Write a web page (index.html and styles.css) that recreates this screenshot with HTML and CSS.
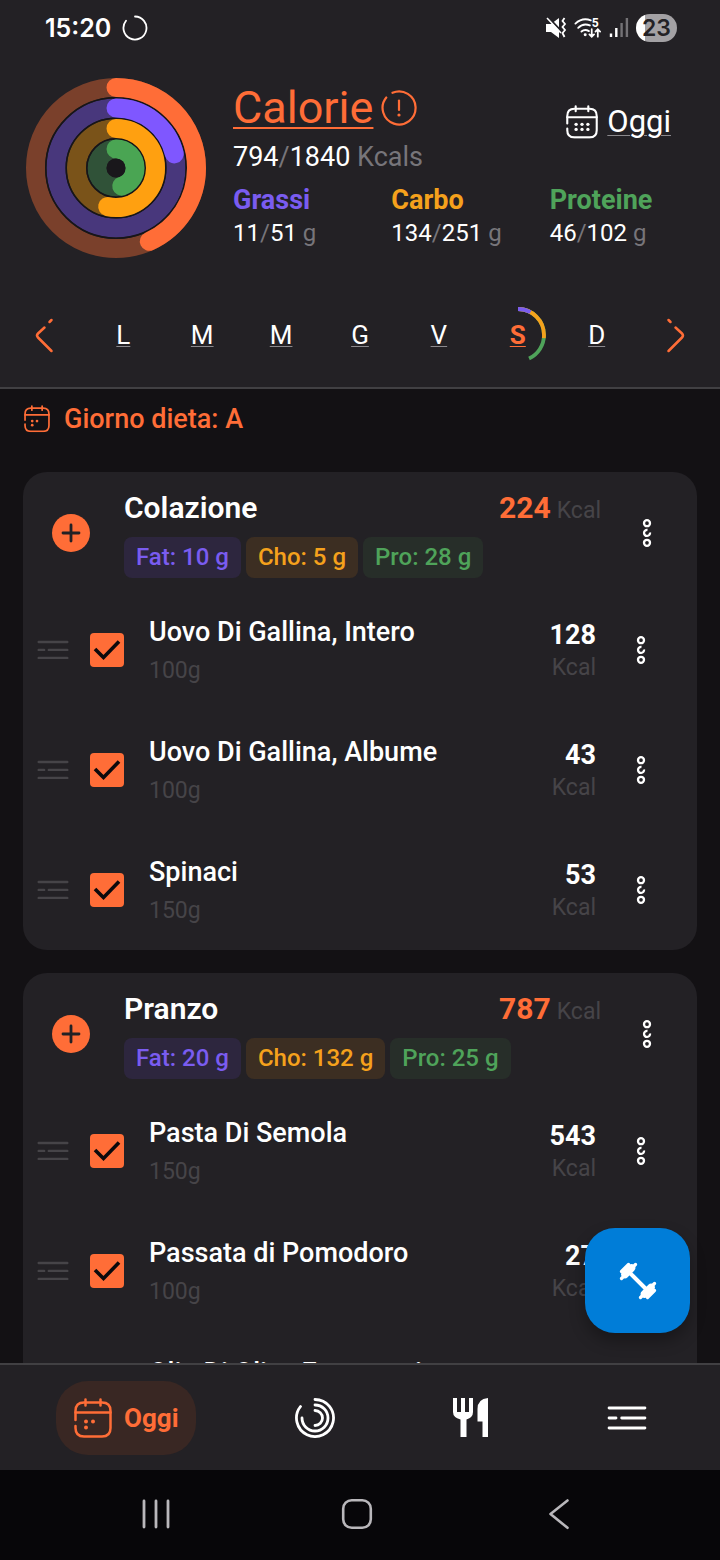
FILE: index.html
```html
<!DOCTYPE html>
<html lang="it">
<head>
<meta charset="utf-8">
<meta name="viewport" content="width=device-width, initial-scale=1">
<title>Diario</title>
<link rel="stylesheet" href="styles.css">
</head>
<body>
<svg class="sprite" aria-hidden="true">
  <symbol id="calendar" viewBox="0 0 38 40">
    <g fill="none" stroke="currentColor" stroke-width="2.500" stroke-linecap="round">
      <path d="M1.500 22V13Q1.500 4.500 10 4.500H28Q36.500 4.500 36.500 13V30Q36.500 38.500 28 38.500H10Q1.500 38.500 1.500 30V28"/>
      <path d="M1.500 14.500H36.500M11.500 1.500V7.500M26.500 1.500V7.500"/>
    </g>
  </symbol>
  <symbol id="dots" viewBox="0 0 16 30">
    <g fill="none" stroke="currentColor" stroke-width="2.300">
      <circle cx="8" cy="5.200" r="3"/>
      <path d="M8.500 12A3 3 0 1 0 11 14.500"/>
      <circle cx="8" cy="24.800" r="3"/>
    </g>
  </symbol>
  <symbol id="lines" viewBox="0 0 38 26">
    <path d="M2 3.500H36M2 13H8.500M14 13H36M2 22.500H36" fill="none" stroke="currentColor" stroke-width="2.800" stroke-linecap="round"/>
  </symbol>
  <symbol id="check" viewBox="0 0 34 34">
    <path d="M5 16L13.500 24.500L29 8.500" fill="none" stroke="currentColor" stroke-width="3.600"/>
  </symbol>
  <symbol id="plus" viewBox="0 0 38 38">
    <path d="M19 11V27M11 19H27" fill="none" stroke="currentColor" stroke-width="2.800" stroke-linecap="round"/>
  </symbol>
</svg>

<header class="top">
  <div class="status">
    <span class="clock">15:20</span>
    <svg class="spinner" viewBox="0 0 26 26" aria-hidden="true"><path d="M13 1.500A11.500 11.500 0 1 1 4 5.800" fill="none" stroke="#fff" stroke-width="1.800" stroke-linecap="round"/></svg>
    <div class="signals">
      <svg class="mute" viewBox="0 0 22 22" aria-hidden="true">
        <path d="M1 7H6L14 1V21L6 15H1Z" fill="#fff"/>
        <path d="M2 -1L18 16" stroke="#232125" stroke-width="2"/><path d="M2 1L16 16" stroke="#fff" stroke-width="1.600"/>
        <path d="M19.500 1L17.500 4L20 7L17.500 10L20 13L17.500 16L19.500 20" fill="none" stroke="#fff" stroke-width="1.800"/>
      </svg>
      <svg class="wifi" viewBox="0 0 30 22" aria-hidden="true">
        <g fill="none" stroke="#fff" stroke-width="2" stroke-linecap="round">
          <path d="M1.500 6Q9 -1 18 2.500M4.500 10.500Q10 5 17 8M8 14.500Q11.500 11.500 16 14"/>
          <path d="M19 12V20M16.500 17.500L19 20L21.500 17.500M25.500 20V12M23 14.500L25.500 12L28 14.500" stroke-width="1.900"/>
        </g>
        <circle cx="12" cy="18" r="1.600" fill="#fff"/>
        <text class="wifi-gen" x="19" y="10">5</text>
      </svg>
      <svg class="bars" viewBox="0 0 20 22" aria-hidden="true">
        <g stroke-width="2.400"><path d="M2 20V16.500M7.300 20V11" stroke="#fff"/><path d="M12.600 20V6M17.900 20V1" stroke="#747276"/></g>
      </svg>
      <span class="battery">23</span>
    </div>
  </div>

  <section class="summary">
    <svg class="rings" viewBox="0 0 180 180" role="img" aria-label="Progressi">
      <g fill="none" stroke-width="19" stroke-linecap="round" transform="rotate(-90 90 90)">
        <circle cx="90" cy="90" r="80.500" stroke="#7a402b"/>
        <circle cx="90" cy="90" r="60" stroke="#48377c"/>
        <circle cx="90" cy="90" r="39.500" stroke="#7a5319"/>
        <circle cx="90" cy="90" r="19" stroke="#305238"/>
        <g fill="none" stroke="#171518" stroke-width="1.500">
          <circle cx="90" cy="90" r="70.200"/><circle cx="90" cy="90" r="49.800"/><circle cx="90" cy="90" r="29.200"/>
        </g>
        <circle cx="90" cy="90" r="80.500" stroke="#ff6d37" pathLength="100" stroke-dasharray="43.200 100"/>
        <circle cx="90" cy="90" r="60" stroke="#7f57ff" pathLength="100" stroke-dasharray="21.200 100"/>
        <circle cx="90" cy="90" r="39.500" stroke="#ffa010" pathLength="100" stroke-dasharray="53.400 100"/>
        <circle cx="90" cy="90" r="19" stroke="#4aa553" pathLength="100" stroke-dasharray="45.100 100"/>
      </g>
      <circle cx="90" cy="90" r="9.500" fill="#19171b"/>
    </svg>
    <div class="info">
      <div class="info-head">
        <div>
          <div class="title-row">
            <a class="title" href="#">Calorie</a>
            <svg class="alert" viewBox="0 0 36 36" aria-hidden="true">
              <g fill="none" stroke="#ff6d37" stroke-width="2.200" stroke-linecap="round">
                <path d="M11.500 2.800A16.500 16.500 0 1 1 5.300 7.500"/><path d="M18 10.500V20"/>
              </g>
              <circle cx="18" cy="25" r="1.600" fill="#ff6d37"/>
            </svg>
          </div>
          <p class="total">794<span class="muted">/</span>1840 <span class="muted">Kcals</span></p>
        </div>
        <a class="today" href="#">
          <svg class="today-icon" viewBox="0 0 38 40" aria-hidden="true">
            <use href="#calendar"/>
            <g fill="currentColor"><circle cx="12" cy="23" r="2"/><circle cx="19" cy="23" r="2"/><circle cx="26" cy="23" r="2"/><circle cx="12" cy="29" r="2"/><circle cx="19" cy="29" r="2"/><circle cx="26" cy="29" r="2"/></g>
          </svg>
          <span class="today-text">Oggi</span>
        </a>
      </div>
      <dl class="macros">
        <div><dt class="fat">Grassi</dt><dd>11<span class="muted">/</span>51 <span class="muted">g</span></dd></div>
        <div><dt class="cho">Carbo</dt><dd>134<span class="muted">/</span>251 <span class="muted">g</span></dd></div>
        <div><dt class="pro">Proteine</dt><dd>46<span class="muted">/</span>102 <span class="muted">g</span></dd></div>
      </dl>
    </div>
  </section>

  <nav class="week" aria-label="Settimana">
    <button class="arrow" type="button" aria-label="Settimana precedente"><svg viewBox="0 0 20 36" aria-hidden="true"><path d="M17.500 3L15.500 5M10.500 10.500L4 16.500Q2 18.500 4 20.500L17.500 34" fill="none" stroke="currentColor" stroke-width="2.500" stroke-linecap="round"/></svg></button>
    <button class="day" type="button"><span>L</span></button>
    <button class="day" type="button"><span>M</span></button>
    <button class="day" type="button"><span>M</span></button>
    <button class="day" type="button"><span>G</span></button>
    <button class="day" type="button"><span>V</span></button>
    <button class="day selected" type="button" aria-current="date">
      <svg class="day-ring" viewBox="0 0 58 58" aria-hidden="true">
        <g fill="none" stroke-width="3.800" transform="rotate(-90 29 29)">
          <circle cx="29" cy="29" r="26" stroke="#4fa35a" pathLength="100" stroke-dasharray="43 100"/>
          <circle cx="29" cy="29" r="26" stroke="#f5a11c" pathLength="100" stroke-dasharray="27 100"/>
          <circle cx="29" cy="29" r="26" stroke="#7a5cf0" pathLength="100" stroke-dasharray="8 100"/>
        </g>
      </svg>
      <span>S</span>
    </button>
    <button class="day" type="button"><span>D</span></button>
    <button class="arrow" type="button" aria-label="Settimana successiva"><svg viewBox="0 0 20 36" aria-hidden="true"><path d="M2.500 3L4.500 5M9.500 10.500L16 16.500Q18 18.500 16 20.500L2.500 34" fill="none" stroke="currentColor" stroke-width="2.500" stroke-linecap="round"/></svg></button>
  </nav>
</header>

<div class="content">
<main class="diary">
  <p class="diet-day">
    <svg class="diet-icon" viewBox="0 0 38 40" aria-hidden="true"><use href="#calendar"/><g fill="currentColor"><circle cx="12" cy="23.500" r="2"/><circle cx="19" cy="23.500" r="2"/><circle cx="12" cy="29.500" r="2"/></g></svg>
    Giorno dieta: A
  </p>

  <section class="card">
    <header class="meal">
      <button class="add" type="button" aria-label="Aggiungi a Colazione"><svg viewBox="0 0 38 38" aria-hidden="true"><use href="#plus"/></svg></button>
      <div class="meal-body">
        <div class="meal-line"><h2>Colazione</h2><p class="meal-kcal"><b>224</b> <span>Kcal</span></p></div>
        <div class="chips"><span class="chip chip-fat">Fat: 10 g</span><span class="chip chip-cho">Cho: 5 g</span><span class="chip chip-pro">Pro: 28 g</span></div>
      </div>
      <button class="more" type="button" aria-label="Opzioni Colazione"><svg viewBox="0 0 16 30" aria-hidden="true"><use href="#dots"/></svg></button>
    </header>
    <ul class="foods">
      <li class="food">
        <svg class="handle" viewBox="0 0 38 26" aria-hidden="true"><use href="#lines"/></svg>
        <span class="tick"><input id="f1" type="checkbox" checked><svg viewBox="0 0 34 34" aria-hidden="true"><use href="#check"/></svg></span>
        <div class="food-text"><label for="f1">Uovo Di Gallina, Intero</label><p>100g</p></div>
        <div class="food-kcal"><b>128</b><span>Kcal</span></div>
        <button class="more" type="button" aria-label="Opzioni Uovo Di Gallina, Intero"><svg viewBox="0 0 16 30" aria-hidden="true"><use href="#dots"/></svg></button>
      </li>
      <li class="food">
        <svg class="handle" viewBox="0 0 38 26" aria-hidden="true"><use href="#lines"/></svg>
        <span class="tick"><input id="f2" type="checkbox" checked><svg viewBox="0 0 34 34" aria-hidden="true"><use href="#check"/></svg></span>
        <div class="food-text"><label for="f2">Uovo Di Gallina, Albume</label><p>100g</p></div>
        <div class="food-kcal"><b>43</b><span>Kcal</span></div>
        <button class="more" type="button" aria-label="Opzioni Uovo Di Gallina, Albume"><svg viewBox="0 0 16 30" aria-hidden="true"><use href="#dots"/></svg></button>
      </li>
      <li class="food">
        <svg class="handle" viewBox="0 0 38 26" aria-hidden="true"><use href="#lines"/></svg>
        <span class="tick"><input id="f3" type="checkbox" checked><svg viewBox="0 0 34 34" aria-hidden="true"><use href="#check"/></svg></span>
        <div class="food-text"><label for="f3">Spinaci</label><p>150g</p></div>
        <div class="food-kcal"><b>53</b><span>Kcal</span></div>
        <button class="more" type="button" aria-label="Opzioni Spinaci"><svg viewBox="0 0 16 30" aria-hidden="true"><use href="#dots"/></svg></button>
      </li>
    </ul>
  </section>

  <section class="card">
    <header class="meal">
      <button class="add" type="button" aria-label="Aggiungi a Pranzo"><svg viewBox="0 0 38 38" aria-hidden="true"><use href="#plus"/></svg></button>
      <div class="meal-body">
        <div class="meal-line"><h2>Pranzo</h2><p class="meal-kcal"><b>787</b> <span>Kcal</span></p></div>
        <div class="chips"><span class="chip chip-fat">Fat: 20 g</span><span class="chip chip-cho">Cho: 132 g</span><span class="chip chip-pro">Pro: 25 g</span></div>
      </div>
      <button class="more" type="button" aria-label="Opzioni Pranzo"><svg viewBox="0 0 16 30" aria-hidden="true"><use href="#dots"/></svg></button>
    </header>
    <ul class="foods">
      <li class="food">
        <svg class="handle" viewBox="0 0 38 26" aria-hidden="true"><use href="#lines"/></svg>
        <span class="tick"><input id="f4" type="checkbox" checked><svg viewBox="0 0 34 34" aria-hidden="true"><use href="#check"/></svg></span>
        <div class="food-text"><label for="f4">Pasta Di Semola</label><p>150g</p></div>
        <div class="food-kcal"><b>543</b><span>Kcal</span></div>
        <button class="more" type="button" aria-label="Opzioni Pasta Di Semola"><svg viewBox="0 0 16 30" aria-hidden="true"><use href="#dots"/></svg></button>
      </li>
      <li class="food">
        <svg class="handle" viewBox="0 0 38 26" aria-hidden="true"><use href="#lines"/></svg>
        <span class="tick"><input id="f5" type="checkbox" checked><svg viewBox="0 0 34 34" aria-hidden="true"><use href="#check"/></svg></span>
        <div class="food-text"><label for="f5">Passata di Pomodoro</label><p>100g</p></div>
        <div class="food-kcal"><b>27</b><span>Kcal</span></div>
        <button class="more" type="button" aria-label="Opzioni Passata di Pomodoro"><svg viewBox="0 0 16 30" aria-hidden="true"><use href="#dots"/></svg></button>
      </li>
      <li class="food">
        <svg class="handle" viewBox="0 0 38 26" aria-hidden="true"><use href="#lines"/></svg>
        <span class="tick"><input id="f6" type="checkbox" checked><svg viewBox="0 0 34 34" aria-hidden="true"><use href="#check"/></svg></span>
        <div class="food-text"><label for="f6">Olio Di Oliva Extravergine</label></div>
      </li>
    </ul>
  </section>
</main>
<button class="fab" type="button" aria-label="Allenamento">
  <svg viewBox="0 0 40 40" aria-hidden="true">
    <g stroke="#fff" stroke-linecap="round" fill="none">
      <path d="M9 9L31 31" stroke-width="4"/>
      <path d="M7 13.500L13.500 7M26.500 33L33 26.500" stroke-width="7.500"/>
      <path d="M3.500 17.500L17.500 3.500M22.500 36.500L36.500 22.500" stroke-width="3.200"/>
      <path d="M3.500 10.500L10.500 3.500M29.500 36.500L36.500 29.500" stroke-width="3.200"/>
    </g>
  </svg>
</button>
</div>

<nav class="tabs" aria-label="Principale">
  <a class="tab active" href="#" aria-current="page">
    <svg class="tab-icon" viewBox="0 0 38 40" aria-hidden="true"><use href="#calendar"/><g fill="currentColor"><circle cx="12" cy="23.500" r="2"/><circle cx="19" cy="23.500" r="2"/><circle cx="12" cy="29.500" r="2"/></g></svg>
    <span>Oggi</span>
  </a>
  <a class="tab" href="#" aria-label="Progressi"><svg class="tab-icon" viewBox="0 0 40 40" aria-hidden="true"><g fill="none" stroke="currentColor" stroke-width="2.800" stroke-linecap="round"><path d="M20 1.500A18.500 18.500 0 1 1 5.500 8.500"/><path d="M20 7A13 13 0 1 1 7 20"/><path d="M20 12.500A7.500 7.500 0 1 1 20 27.500"/></g></svg></a>
  <a class="tab" href="#" aria-label="Alimenti"><svg class="tab-icon" viewBox="0 0 40 40" aria-hidden="true"><path fill="currentColor" d="M2 0H6V14H10V0H14V14H18V0H22V14Q22 19.500 15.500 21.500V39H9.500V21.500Q2 19.500 2 14ZM37 0V39H31.500V23.500H26.500V11Q26.500 1 37 0Z"/></svg></a>
  <a class="tab" href="#" aria-label="Menu"><svg class="tab-icon" viewBox="0 0 38 26" aria-hidden="true"><use href="#lines"/></svg></a>
</nav>

<nav class="system" aria-label="Sistema">
  <button type="button" aria-label="Recenti"><svg viewBox="0 0 32 32" aria-hidden="true"><path d="M4 3V29M16 3V29M28 3V29" fill="none" stroke="currentColor" stroke-width="2.800" stroke-linecap="round"/></svg></button>
  <button type="button" aria-label="Home"><svg viewBox="0 0 32 32" aria-hidden="true"><rect x="2.200" y="2.200" width="27.600" height="27.600" rx="8.500" fill="none" stroke="currentColor" stroke-width="2.600"/></svg></button>
  <button type="button" aria-label="Indietro"><svg viewBox="0 0 32 32" aria-hidden="true"><path d="M24.500 2.500L7.500 16L24.500 29.800" fill="none" stroke="currentColor" stroke-width="2.600" stroke-linecap="round" stroke-linejoin="round"/></svg></button>
</nav>
</body>
</html>
```

FILE: styles.css
```css
:root {
  --orange: #ff6d37;
  --purple: #7a5cf0;
  --amber: #f5a11c;
  --green: #4fa35a;
  --surface: #232125;
  --line: #414043;
}

* {
  box-sizing: border-box;
  margin: 0;
  padding: 0;
}

body {
  display: flex;
  flex-direction: column;
  height: 100vh;
  background: #131114;
  color: #fff;
  font-family: Roboto, "Liberation Sans", sans-serif;
  font-size: 23px;
  line-height: 30px;
}

button {
  border: 0;
  background: none;
  color: inherit;
  font: inherit;
}

a {
  color: inherit;
  text-decoration: none;
}

svg {
  display: block;
  flex: none;
}

.sprite {
  position: absolute;
  width: 0;
  height: 0;
}

.muted {
  color: #77757a;
}

/* Header */
.top {
  background: var(--surface);
  border-bottom: 2px solid var(--line);
}

.status {
  display: flex;
  align-items: center;
  height: 56px;
  padding: 0 43px 0 45px;
}

.clock {
  font-family: Inter, Roboto, sans-serif;
  font-size: 25px;
  font-weight: 600;
}

.spinner {
  width: 26px;
  margin-left: 11px;
}

.signals {
  display: flex;
  align-items: center;
  gap: 7px;
  margin-left: auto;
}

.mute {
  width: 22px;
}

.wifi {
  width: 28px;
  overflow: visible;
}

.wifi-gen {
  fill: #fff;
  font: 700 13px Roboto, sans-serif;
}

.bars {
  width: 20px;
}

.battery {
  width: 41px;
  border-radius: 14px;
  background: linear-gradient(90deg, #fff 9px, #a3a1a4 9px);
  color: var(--surface);
  font-family: Inter, Roboto, sans-serif;
  font-weight: 600;
  line-height: 28px;
  text-align: center;
}

.summary {
  display: flex;
  gap: 27px;
  padding: 22px 12px 25px 26px;
}

.rings {
  width: 180px;
}

.info {
  flex: 1;
}

.info-head {
  display: flex;
  justify-content: space-between;
  align-items: center;
  padding-right: 37px;
}

.title-row {
  display: flex;
  align-items: center;
  gap: 8px;
  padding-top: 2px;
}

.title {
  color: var(--orange);
  font-size: 45px;
  line-height: 56px;
  text-decoration: underline 2px;
  text-underline-offset: 4px;
}

.alert {
  width: 36px;
}

.total {
  font-size: 27px;
  line-height: 42px;
}

.today {
  display: flex;
  align-items: center;
  gap: 9px;
  padding-bottom: 12px;
  font-size: 31px;
}

.today-icon {
  width: 32px;
}

.today-text {
  text-decoration: underline 1px #8b898d;
  text-underline-offset: 3px;
}

.macros {
  display: grid;
  grid-template-columns: repeat(3, 1fr);
  padding-top: 5px;
}

.macros dt {
  font-size: 27px;
  font-weight: 700;
  line-height: 34px;
}

.macros dd {
  padding-top: 1px;
  font-size: 24px;
}

.fat {
  color: var(--purple);
}

.cho {
  color: var(--amber);
}

.pro {
  color: var(--green);
}

.week {
  display: grid;
  grid-template-columns: repeat(9, 1fr);
  height: 104px;
  padding: 0 5px;
  font-size: 26px;
}

.day,
.arrow {
  display: grid;
  place-items: center;
}

.day > * {
  grid-area: 1 / 1;
}

.day span {
  text-decoration: underline 1px #8b898d;
  text-underline-offset: 2px;
}

.arrow {
  color: var(--orange);
}

.arrow svg {
  width: 20px;
}

.selected {
  color: var(--orange);
  font-weight: 700;
}

.day.selected span {
  text-decoration-color: var(--orange);
}

.day-ring {
  width: 58px;
}

/* Diary */
.content {
  position: relative;
  flex: 1;
  min-height: 0;
}

.diary {
  height: 100%;
  overflow: hidden;
  padding: 0 23px;
}

.diet-day {
  display: flex;
  align-items: center;
  gap: 14px;
  height: 60px;
  margin-bottom: 23px;
  padding-left: 1px;
  color: var(--orange);
  font-size: 27px;
  font-weight: 500;
}

.diet-icon {
  width: 26px;
}

.card {
  margin-bottom: 23px;
  border-radius: 24px;
  background: var(--surface);
}

.meal {
  display: flex;
  align-items: center;
  padding: 19px 42px 12px 29px;
}

.add {
  width: 38px;
  height: 38px;
  border-radius: 50%;
  background: var(--orange);
  color: var(--surface);
}

.meal .add,
.meal .more {
  margin-bottom: 4px;
}

.meal-body {
  flex: 1;
  margin: 0 38px 0 34px;
}

.meal-line {
  display: flex;
  justify-content: space-between;
  height: 34px;
  line-height: 34px;
}

.meal h2 {
  font-size: 30px;
  font-weight: 600;
}

.meal-kcal {
  display: flex;
  align-items: baseline;
  gap: 6px;
  color: #464448;
}

.meal-kcal b {
  color: var(--orange);
  font-size: 30px;
}

.chips {
  display: flex;
  gap: 5px;
  padding-top: 12px;
}

.chip {
  padding: 0 12px;
  border-radius: 8px;
  font-size: 24px;
  font-weight: 500;
  line-height: 41px;
}

.chip-fat {
  background: #2d263e;
  color: var(--purple);
}

.chip-cho {
  background: #3c2e22;
  color: var(--amber);
}

.chip-pro {
  background: #272e29;
  color: var(--green);
}

.more svg {
  width: 16px;
}

.foods {
  list-style: none;
}

.food {
  display: flex;
  align-items: center;
  height: 120px;
  padding: 0 48px 0 14px;
}

.handle {
  width: 32px;
  color: #464448;
}

.tick {
  display: grid;
  margin: 0 25px 0 21px;
}

.tick > * {
  grid-area: 1 / 1;
  width: 34px;
  height: 34px;
}

.tick input {
  appearance: none;
  border-radius: 4px;
  background: var(--orange);
}

.tick svg {
  color: #0c0a0d;
  pointer-events: none;
}

.food-text {
  flex: 1;
  min-height: 71px;
  padding-top: 2px;
}

.food-text label {
  display: block;
  font-size: 27px;
  font-weight: 500;
}

.food-text p {
  padding-top: 9px;
  color: #464448;
}

.food-kcal {
  display: grid;
  gap: 3px;
  margin-right: 37px;
  padding-top: 3px;
  color: #464448;
  text-align: right;
}

.food-kcal b {
  color: #fff;
  font-size: 27px;
}

.fab {
  position: absolute;
  right: 30px;
  bottom: 30px;
  display: grid;
  place-items: center;
  width: 105px;
  height: 105px;
  border-radius: 30px;
  background: #007dd8;
  box-shadow: 0 8px 16px rgb(0 0 0 / 30%);
}

.fab svg {
  width: 40px;
}

/* Bottom bars */
.tabs {
  display: flex;
  justify-content: space-between;
  align-items: center;
  height: 107px;
  padding: 0 56px;
  border-top: 2px solid var(--line);
  background: var(--surface);
}

.tab {
  display: flex;
  align-items: center;
  gap: 11px;
  padding: 17px;
  font-size: 26px;
  font-weight: 700;
}

.tab-icon {
  width: 40px;
  height: 40px;
}

.active {
  border-radius: 32px;
  background: #392723;
  color: var(--orange);
}

.system {
  display: grid;
  grid-template-columns: repeat(3, 1fr);
  height: 90px;
  padding: 0 60px 2px 55px;
  background: #070609;
  color: #b9b7bb;
}

.system button {
  display: grid;
  place-items: center;
}

.system svg {
  width: 32px;
}
```
